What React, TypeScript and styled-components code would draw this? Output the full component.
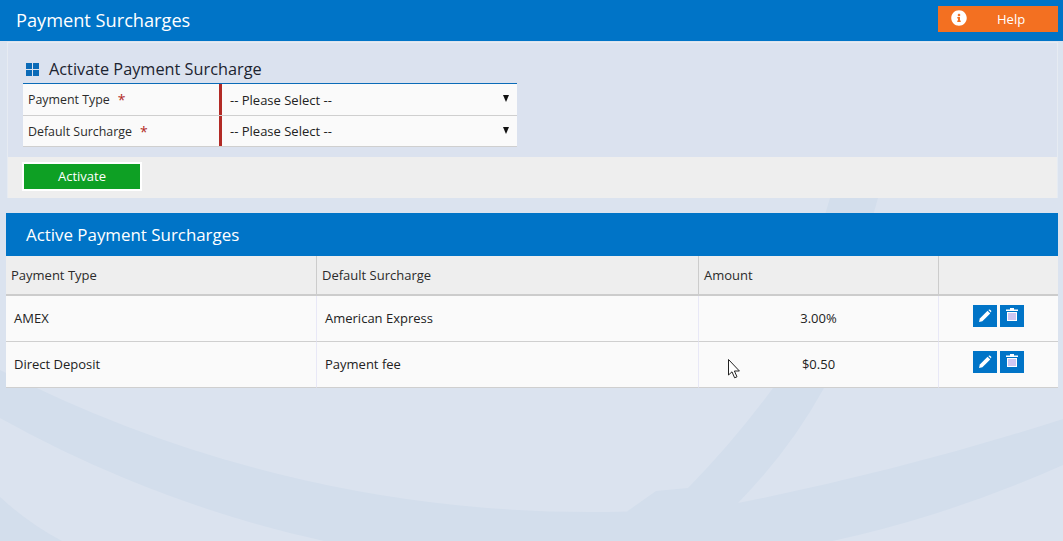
import React from 'react';
import styled, { createGlobalStyle } from 'styled-components';
import { FaInfoCircle } from 'react-icons/fa';

const Global = createGlobalStyle`
  html, body { margin: 0; padding: 0; }
  body { background: #dbe3ef; font-family: "Open Sans", "Noto Sans", sans-serif; color: #222; overflow: hidden; }
  * { box-sizing: border-box; }
`;

const Page = styled.div`
  position: relative;
  width: 1063px;
  height: 541px;
  overflow: hidden;
`;
const Backdrop = styled.svg`
  position: absolute;
  inset: 0;
  z-index: 0;
`;
const Content = styled.div`
  position: relative;
  z-index: 1;
`;
const Header = styled.header`
  height: 41px;
  background: #0074c7;
  display: flex;
  align-items: center;
  justify-content: space-between;
  padding: 0 5px 0 16px;
`;
const PageTitle = styled.h1`
  margin: 0;
  font-size: 18.2px;
  font-weight: 400;
  color: #fff;
  line-height: 41px;
`;
const HelpButton = styled.button`
  width: 120px;
  height: 26px;
  margin-top: -3px;
  background: #f37021;
  border: 0;
  color: #fff;
  font: 400 13px "Open Sans", sans-serif;
  display: flex;
  align-items: center;
  padding: 0 0 0 13px;
  svg { width: 16px; height: 16px; margin-top: -3px; }
  span { margin-left: 30px; }
`;
const Panel = styled.section`
  margin: 1px 5px 0 7px;
  border: 1px solid #e6ebf2;
  border-bottom: 0;
  background: #dbe2ef;
`;
const PanelBody = styled.div`
  padding: 13px 15px 10px 15px;
`;
const SectionTitle = styled.h2`
  margin: 0 0 1px;
  height: 26px;
  display: flex;
  align-items: center;
  gap: 10px;
  padding-left: 3px;
  font-size: 16.3px;
  font-weight: 400;
  color: #1c2430;
  line-height: 24px;
`;
const FormGrid = styled.div`
  width: 494px;
  border-top: 1px solid #0a6bb8;
`;
const FormRow = styled.div`
  display: grid;
  grid-template-columns: 196px 1fr;
  height: 32px;
  background: #fafafa;
  border-bottom: 1px solid #cfcfcf;
  &:last-child { height: 31px; }
`;
const FieldLabel = styled.label`
  font-size: 12.4px;
  padding-left: 5px;
  display: flex;
  align-items: center;
  color: #2b2b2b;
  height: 30px;
`;
const Req = styled.span`
  color: #b22a25;
  font-size: 14px;
  margin-left: 8px;
`;
const SelectBox = styled.div`
  border-left: 3px solid #b22a25;
  display: flex;
  align-items: center;
  justify-content: space-between;
  padding: 0 8px 0 8px;
  font-size: 13px;
  color: #222;
`;
const Caret = styled.i`
  width: 0;
  height: 0;
  border-left: 3.5px solid transparent;
  border-right: 3.5px solid transparent;
  border-top: 7px solid #111;
  margin-top: -2px;
`;
const PanelFooter = styled.div`
  height: 41px;
  background: #eeeeee;
  padding: 5px 0 0 14px;
`;
const ActivateButton = styled.button`
  width: 120px;
  height: 29px;
  background: #0ea024;
  border: 2px solid #fff;
  color: #fff;
  font: 400 13px "Open Sans", sans-serif;
  padding: 0 0 2px;
`;
const TableCard = styled.section`
  margin: 15px 5px 0 6px;
`;
const TableTitle = styled.h2`
  margin: 0;
  height: 43px;
  background: #0074c7;
  color: #fff;
  font-size: 16.9px;
  font-weight: 400;
  line-height: 44px;
  padding-left: 20px;
`;
const Table = styled.table`
  width: 1052px;
  table-layout: fixed;
  border-collapse: separate;
  border-spacing: 0;
  background: #fafafa;
`;
const Th = styled.th`
  height: 40px;
  background: #eeeeee;
  border-bottom: 2px solid #cccccc;
  border-right: 1px solid #cccccc;
  font-size: 13px;
  font-weight: 400;
  text-align: left;
  padding: 0 5px;
  color: #2b2b2b;
  &:last-child { border-right: 0; }
`;
const Td = styled.td<{ $center?: boolean }>`
  height: 46px;
  border-bottom: 1px solid #cfcfcf;
  border-right: 1px solid #e8e8f6;
  font-size: 13px;
  padding: 0 8px 2px;
  color: #222;
  text-align: ${p => (p.$center ? 'center' : 'left')};
  &:last-child { border-right: 0; }
`;
const Actions = styled.div`
  display: flex;
  gap: 3px;
  justify-content: flex-start;
  padding: 0 0 3px 26px;
`;
const IconButton = styled.button`
  width: 24px;
  height: 22px;
  background: #0074c7;
  border: 0;
  padding: 0;
  display: flex;
  align-items: center;
  justify-content: center;
`;
const Cursor = styled.svg`
  position: absolute;
  left: 728px;
  top: 359px;
  z-index: 2;
`;
const TrashGlyph = styled.svg`
  margin-bottom: 3px;
`;

const GridIcon = () => (
  <svg width="13" height="13" viewBox="0 0 13 13" aria-hidden>
    <rect x="0" y="0" width="6" height="6" fill="#0a6bb8" />
    <rect x="7" y="0" width="6" height="6" fill="#0a6bb8" />
    <rect x="0" y="7" width="6" height="6" fill="#0a6bb8" />
    <rect x="7" y="7" width="6" height="6" fill="#0a6bb8" />
  </svg>
);
const PencilIcon = () => (
  <svg width="14" height="14" viewBox="0 0 14 14" aria-hidden>
    <path d="M1 13 L1.8 9.6 L9.6 1.8 L12.2 4.4 L4.4 12.2 Z" fill="#fff" />
    <path d="M10.4 1 L11.2 0.6 Q11.8 0.4 12.4 1 L13 1.6 Q13.5 2.2 13.2 2.8 L12.9 3.6 Z" fill="#fff" />
  </svg>
);
const TrashIcon = () => (
  <TrashGlyph width="12" height="13" viewBox="0 0 12 13" aria-hidden>
    <path d="M0 1.5 H4 V0 H8 V1.5 H12 V3 H0 Z" fill="#fff" />
    <rect x="1" y="4" width="10" height="9" fill="#fff" />
    <path d="M3 5 V12 M5 5 V12 M7 5 V12 M9 5 V12" stroke="#a08fe6" strokeWidth="1" />
  </TrashGlyph>
);

const rows = [
  { type: 'AMEX', name: 'American Express', amount: '3.00%' },
  { type: 'Direct Deposit', name: 'Payment fee', amount: '$0.50' },
];

export default function App() {
  return (
    <Page>
      <Global />
      <Backdrop width="1063" height="541" viewBox="0 0 1063 541" aria-hidden>
        <path
          d="M0 370 A1295 1295 0 0 0 627 511.5 L656 491 L688 488 Q735 440 773 388 L830 198 L878 198 L824 388 Q790 450 738 503 Q905 470 1063 419 L1063 465 A1186 1186 0 0 1 0 418 Z"
          fill="#d3deec"
        />
        <path d="M0 497 Q28 523 62 541 L0 541 Z" fill="#d3deec" />
      </Backdrop>
      <Content>
        <Header>
          <PageTitle>Payment Surcharges</PageTitle>
          <HelpButton><FaInfoCircle /><span>Help</span></HelpButton>
        </Header>
        <Panel>
          <PanelBody>
            <SectionTitle><GridIcon />Activate Payment Surcharge</SectionTitle>
            <FormGrid>
              <FormRow>
                <FieldLabel>Payment Type<Req>*</Req></FieldLabel>
                <SelectBox>-- Please Select --<Caret /></SelectBox>
              </FormRow>
              <FormRow>
                <FieldLabel>Default Surcharge<Req>*</Req></FieldLabel>
                <SelectBox>-- Please Select --<Caret /></SelectBox>
              </FormRow>
            </FormGrid>
          </PanelBody>
          <PanelFooter><ActivateButton>Activate</ActivateButton></PanelFooter>
        </Panel>
        <TableCard>
          <TableTitle>Active Payment Surcharges</TableTitle>
          <Table>
            <colgroup>
              <col style={{ width: 311 }} />
              <col style={{ width: 382 }} />
              <col style={{ width: 240 }} />
              <col />
            </colgroup>
            <thead>
              <tr><Th>Payment Type</Th><Th>Default Surcharge</Th><Th>Amount</Th><Th /></tr>
            </thead>
            <tbody>
              {rows.map(r => (
                <tr key={r.type}>
                  <Td>{r.type}</Td>
                  <Td>{r.name}</Td>
                  <Td $center>{r.amount}</Td>
                  <Td>
                    <Actions>
                      <IconButton aria-label="Edit"><PencilIcon /></IconButton>
                      <IconButton aria-label="Delete"><TrashIcon /></IconButton>
                    </Actions>
                  </Td>
                </tr>
              ))}
            </tbody>
          </Table>
        </TableCard>
      </Content>
      <Cursor width="13" height="20" viewBox="0 0 13 20" aria-hidden>
        <path d="M0.5 0.5 V16 L4 12.8 L6.6 18.8 L9 17.8 L6.4 12 H11.4 Z" fill="#fff" stroke="#222" strokeWidth="1" />
      </Cursor>
    </Page>
  );
}
